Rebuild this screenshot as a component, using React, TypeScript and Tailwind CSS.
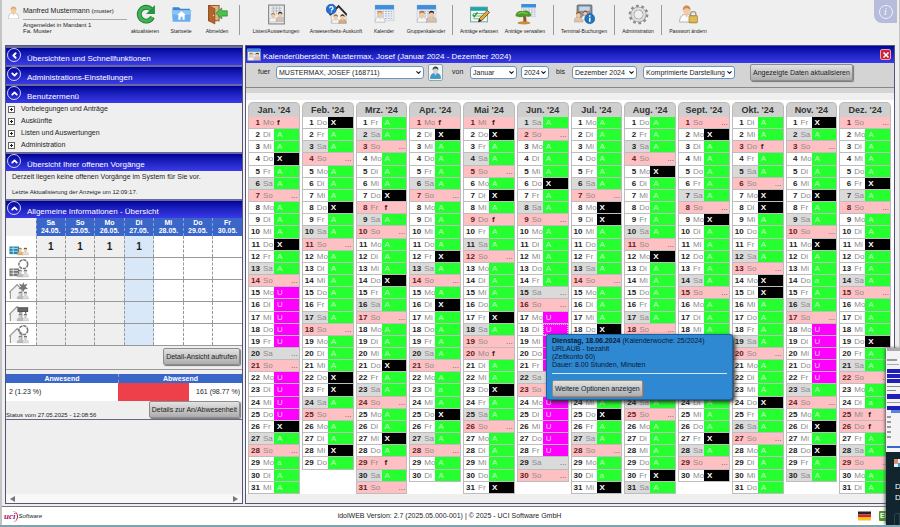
import type { ReactNode } from "react";
import { ChevronDown, ChevronLeft, ChevronUp, X } from "lucide-react";

const WEEKDAYS = ["So", "Mo", "Di", "Mi", "Do", "Fr", "Sa"];

// One character per day: A/a = anwesend, X = abwesend, U = Urlaub, f = Feiertag, . = frei
const MONTHS = [
  { label: "Jan. '24", days: "fAAXAA.AAAXAA.UUUUU..UUUUXA.aAA" },
  { label: "Feb. '24", days: "XAA.AAAXAA.AAAAAA.AAAXXA.AAXA" },
  { label: "Mrz. '24", days: "AA.AAAXfA.AAAXAA.AAAXAA.AAXAfA." },
  { label: "Apr. '24", days: "fXAAAA.AAAAXA.AXAAAA.AaAXAA.AA" },
  { label: "Mai '24", days: "fXAA.AXAfAA.AAAAXA.fAAXAA.AAAAX" },
  { label: "Jun. '24", days: "A.AAAXAA.AAAAA..UUUUU..UUUUU.." },
  { label: "Jul. '24", days: "AAAAAA.XXAAAA.AAAXAA.AAAXAA.AaX" },
  { label: "Aug. '24", days: "AAA.XAAAAA.XAAAAA.AAAAAA.AAAAXA" },
  { label: "Sept. '24", days: ".XAAAAA.XAAAAA.AAAAAA.AAAAXA.X" },
  { label: "Okt. '24", days: "AAfAA.XXAAAA.XXAAAA.AAAXAA.AAAA" },
  { label: "Nov. '24", days: "XA.AAAXAA.XAAaAA.UUUUUA.AXAXAA" },
  { label: "Dez. '24", days: ".AAAAXA.AAXAAA.AAAXAA.AaffAA.AA" },
];

const CODE_CLASS: Record<string, string> = {
  A: "bg-[#25ff30] text-[#c4ffc6]",
  a: "bg-[#25ff30] text-[#c4ffc6]",
  X: "bg-black text-white font-bold",
  U: "bg-[#ff00ff] text-[#ffd0ff]",
  f: "text-[#401818] font-bold",
};

function Person({ x = 0, y = 0, s = 1, body = "#f4f4f4", hair = "#8a5a2c", skin = "#f1c9a2" }: { x?: number; y?: number; s?: number; body?: string; hair?: string; skin?: string }) {
  return (
    <g transform={`translate(${x} ${y}) scale(${s})`}>
      <path d="M0 12c0-4 2-5.5 5-5.5S10 8 10 12z" fill={body} stroke="#999" strokeWidth=".5" />
      <path d="M3.6 6.5h2.8L5 9z" fill={skin} />
      <ellipse cx="5" cy="3.8" rx="2.4" ry="2.9" fill={skin} />
      <path d="M2.4 4C2 1.400 3.500.4 5 .4S8 1.400 7.600 4C7 2.500 6 2.200 5 2.200S3 2.500 2.400 4z" fill={hair} />
    </g>
  );
}

function CalendarShape({ x = 0, y = 0, w = 18, h = 15 }: { x?: number; y?: number; w?: number; h?: number }) {
  return (
    <g transform={`translate(${x} ${y})`}>
      <rect width={w} height={h} fill="#eef1f7" stroke="#b4bccb" strokeWidth=".5" />
      <rect width={w} height={h * 0.28} fill="#3f8edb" />
      {[0.4, 0.55, 0.7, 0.85].map((r) => (
        <path key={r} d={`M${w * 0.1} ${h * r}H${w * 0.92}`} stroke="#a5aec0" strokeWidth="1" strokeDasharray="1.6 1" />
      ))}
    </g>
  );
}

const icons: Record<string, ReactNode> = {
  refresh: (
    <g>
      <path d="M15.500 5.200A6.600 6.600 0 1 0 16.600 12.500" fill="none" stroke="#1d7d35" strokeWidth="4.600" />
      <path d="M15.500 5.200A6.600 6.600 0 1 0 16.600 12.500" fill="none" stroke="#3fb252" strokeWidth="3" />
      <path d="M19 1v8.500h-8.500z" fill="#279642" />
    </g>
  ),
  home: (
    <g>
      <path d="M1.500 3h6l1.500 1.500h9V8h-16.500z" fill="#3d86cf" />
      <path d="M.8 6h18.400l-.8 11H1.600z" fill="#69aef0" />
      <path d="M.8 6h18.400l-.3 4H1.100z" fill="#8cc4f8" />
      <path d="M10 6.800 5.800 10.500H7V15h2.200v-2.800h1.800V15H13v-4.500h1.200z" fill="#fff" />
    </g>
  ),
  exit: (
    <g>
      <path d="M1.500 1.500h10V16h-10z" fill="#d9b489" stroke="#9b5a2c" />
      <path d="m1.500 1.500 6 3V19l-6-3z" fill="#b5642d" stroke="#864419" strokeWidth=".6" />
      <circle cx="6.200" cy="11" r=".7" fill="#f6d98c" />
      <path d="M8.500 8.800 14 3.800v2.700h5.300v5H14v2.800z" fill="#4fc04c" stroke="#23862c" strokeWidth=".7" />
    </g>
  ),
  lists: (
    <g>
      <rect x="2.500" y="1" width="15" height="18" fill="#e8eaee" stroke="#7c8088" />
      <path d="M5 4h10M5 6.500h10M7 2v8M10 2v8M13 2v8" stroke="#b2b6bf" strokeWidth=".7" />
      <Person x={3} y={8} s={0.75} hair="#b78344" />
      <Person x={9.500} y={7} s={0.8} hair="#3b2417" body="#d5c3b1" />
    </g>
  ),
  presence: (
    <g>
      <path d="M5 10 12 3l7 7v8H5z" fill="#f4f0ec" stroke="#999" strokeWidth=".5" />
      <path d="m3.500 10.500 8.500-8.500 8 8.500" fill="none" stroke="#332a29" strokeWidth="1.800" />
      <Person x={5.500} y={9.500} s={0.75} hair="#9d652e" />
      <Person x={12} y={9.500} s={0.75} hair="#3b2417" body="#d6aa7b" />
      <circle cx="5" cy="5" r="4.800" fill="#2370cf" stroke="#174b99" strokeWidth=".6" />
      <path d="M3.500 4c0-2 3.200-2 3.200 0C6.700 5.200 5.100 5 5.100 6.300M5.100 7.200v1" fill="none" stroke="#fff" strokeWidth="1.200" />
    </g>
  ),
  calendar: (
    <g>
      <CalendarShape x={1} y={1} />
      <Person x={1} y={6} s={0.95} hair="#c39260" />
    </g>
  ),
  group: (
    <g>
      <CalendarShape x={1} y={1} />
      <Person x={1} y={6} s={0.95} hair="#a56b32" />
      <Person x={10} y={6} s={0.95} hair="#332017" body="#d8c1a8" />
    </g>
  ),
  request: (
    <g>
      <rect x="1.500" y="3" width="16" height="14" fill="#f1fbf6" stroke="#7aa6a2" />
      <rect x="1.500" y="3" width="16" height="3.500" fill="#20a5a6" />
      <path d="M4 9h10M4 11.500h8M4 14h6" stroke="#79b57e" strokeWidth="1" />
      <path d="m3.500 10 1.500 2 3-4" fill="none" stroke="#26963a" strokeWidth="1.300" />
      <path d="m9 17 1-3.300L17.500 6l2 2L12 16z" fill="#e7ad3c" stroke="#5d4120" strokeWidth=".8" />
      <path d="m9 17 1-3 1.800 1.900z" fill="#222" />
    </g>
  ),
  manage: (
    <g>
      <CalendarShape x={6} y={0} w={14} h={12} />
      <path d="M7.500 18c.9-3.200.6-5-.8-8l3-.3c1 3 1.600 5 1.100 8.300z" fill="#965726" />
      <path d="M.5 11.500C.5 8 4 6 7.500 7 10 5.200 15 7 15.500 11.200c-2 1.300-4 .8-6 .3-2 1-6 1.800-9 0z" fill="#4c9a2e" />
      <path d="M3 9.500c3-2 6-1.500 9 0" stroke="#8bc34a" fill="none" />
      <ellipse cx="8.500" cy="18" rx="6" ry="1.600" fill="#c98c3c" />
    </g>
  ),
  terminal: (
    <g>
      <rect x="3" y="1" width="14" height="12" rx="1" fill="#8b9099" stroke="#666b74" />
      <rect x="5" y="2.500" width="10" height="4" fill="#bfd8ee" />
      <Person x={0} y={7} s={0.85} hair="#8a5328" body="#e3c2a4" />
      <Person x={7} y={6} s={0.75} hair="#b3432c" />
      <circle cx="15" cy="14" r="4.800" fill="#1e75bd" stroke="#0f5090" strokeWidth=".5" />
      <path d="M15 13v4M15 10.700v1.400" stroke="#fff" strokeWidth="1.500" />
    </g>
  ),
  gear: (
    <g fill="none">
      <circle cx="10" cy="10" r="8.200" stroke="#8c8c8c" strokeWidth="2.400" strokeDasharray="2.580 2.570" />
      <circle cx="10" cy="10" r="5.800" stroke="#8c8c8c" strokeWidth="3.400" />
      <circle cx="10" cy="10" r="5.800" stroke="#dedede" strokeWidth="2.400" />
    </g>
  ),
  password: (
    <g>
      <Person x={1.500} y={1} s={1.350} hair="#c98e4d" body="#fafafa" />
      <path d="M12 11.500V9.500c0-3 5-3 5 0v2" fill="none" stroke="#999" strokeWidth="1.300" />
      <rect x="10.500" y="11" width="8" height="7" rx=".8" fill="#d8b04a" stroke="#9b7827" strokeWidth=".6" />
      <path d="M11 13.500h7M11 15.500h7" stroke="#efd587" strokeWidth=".6" />
    </g>
  ),
};

const TOOLBAR = [
  [
    { label: "aktualisieren", icon: "refresh", width: "w-9" },
    { label: "Startseite", icon: "home", width: "w-9" },
    { label: "Abmelden", icon: "exit", width: "w-9" },
  ],
  [
    { label: "Listen/Auswertungen", icon: "lists", width: "w-16" },
    { label: "Anwesenheits-Auskunft", icon: "presence", width: "w-14" },
    { label: "Kalender", icon: "calendar", width: "w-10" },
    { label: "Gruppenkalender", icon: "group", width: "w-11" },
  ],
  [
    { label: "Anträge erfassen", icon: "request", width: "w-11" },
    { label: "Anträge verwalten", icon: "manage", width: "w-12" },
  ],
  [{ label: "Terminal-Buchungen", icon: "terminal", width: "w-13" }],
  [{ label: "Administration", icon: "gear", width: "w-[38px]" }],
  [{ label: "Passwort ändern", icon: "password", width: "w-11" }],
];

function TopBar() {
  return (
    <header className="flex h-[45px] shrink-0 items-start">
      <div className="flex w-[125px] shrink-0 gap-1 pl-[6px] pt-[6px]">
        <svg viewBox="0 0 10 12" className="h-[13px] w-[11px] shrink-0" aria-hidden="true">
          <Person hair="#d9a86e" body="#fff" />
        </svg>
        <div className="flex-1">
          <p className="whitespace-nowrap border-b border-[#aaa] pb-[3px] text-[7px] leading-[9px]">
            Manfred Mustermann <span className="text-[6px]">(muster)</span>
          </p>
          <p className="whitespace-nowrap pt-[2px] text-[6px] leading-[6px]">
            Angemeldet in Mandant 1<br />
            Fa. Muster
          </p>
        </div>
      </div>
      <nav className="flex flex-1 pt-1">
        {TOOLBAR.map((group, i) => (
          <div key={i} className="flex">
            {i > 0 && <span className="mx-1 mt-px h-[30px] w-px bg-[#9a9a9a]" />}
            {group.map((item) => (
              <button key={item.label} type="button" className={`flex flex-col items-center gap-[3px] ${item.width}`}>
                <svg viewBox="0 0 20 20" className="size-[21px] shrink-0" aria-hidden="true">
                  {icons[item.icon]}
                </svg>
                <span className="whitespace-nowrap text-[5px] leading-[7px]">{item.label}</span>
              </button>
            ))}
          </div>
        ))}
      </nav>
      <button type="button" aria-label="Info" className="mr-[2px] flex size-[23px] items-center justify-center rounded-bl-lg bg-[#b7bbdc]">
        <span className="flex size-[14px] items-center justify-center rounded-full border border-white/80 font-[Liberation_Serif] text-[10px] italic leading-none text-white">
          i
        </span>
      </button>
    </header>
  );
}

function SectionHeader({ title, icon: Icon = ChevronUp }: { title: string; icon?: typeof ChevronUp }) {
  return (
    <h2 className="border-t-2 border-[#6a6a9a] text-white">
      <button type="button" className="flex h-[17px] w-full items-start gap-[6px] bg-linear-to-b from-[#02029a] to-[#3a3ae8] pl-px">
        <span className="flex size-[14px] shrink-0 items-center justify-center rounded-full border border-white/80">
          <Icon size={9} strokeWidth={5} />
        </span>
        <span className="pt-[6px] text-[8px] leading-[10px]">{title}</span>
      </button>
    </h2>
  );
}

function GrayButton({ children, className = "" }: { children: ReactNode; className?: string }) {
  return (
    <button
      type="button"
      className={`h-[17px] whitespace-nowrap rounded-[2px] border border-[#8c8c8c] bg-linear-to-b from-[#e2e2e2] to-[#adadad] px-[2px] text-[7px] leading-[10px] shadow-[1px_1px_1px_#777] ${className}`}
    >
      {children}
    </button>
  );
}

function StatusIcon({ kind }: { kind: number }) {
  const color = kind === 0;
  return (
    <svg viewBox="0 0 22 22" className="h-[21px] w-[22px]" aria-hidden="true">
      {kind < 2 ? (
        <g>
          <path d="M1 11h10v8H1z" fill={color ? "#2787a8" : "#777"} />
          <path d="M2 13h8M2 16h8M5 11v8" stroke={color ? "#a5dced" : "#ddd"} strokeWidth="1" />
        </g>
      ) : (
        <path d="M2 20v-8l7-7 5 5v10M.8 13 9 4.800l5 5" fill="#f2f2f2" stroke="#999" strokeWidth="1.200" />
      )}
      <Person x={9} y={12} s={0.65} hair={color ? "#b36b2b" : "#666"} skin={color ? "#f1c9a2" : "#ccc"} body={color ? "#e8b06d" : "#bbb"} />
      <Person x={14.500} y={12} s={0.65} hair={color ? "#5b341b" : "#555"} skin={color ? "#f1c9a2" : "#ccc"} body={color ? "#f0dfcb" : "#ddd"} />
      {(kind === 1 || kind === 4) && <circle cx="15.500" cy="6.500" r="4.600" fill="none" stroke="#777" strokeWidth="1.600" strokeDasharray="3.400 .8" />}
      {kind === 2 && <path d="m15.500 2 1 3 3.500-1-2 3 2.500 2.500-3.500.2-1.500 3-1.500-3-3.500-.2 2.500-2.500-2-3 3.500 1z" fill="#777" />}
      {kind === 3 && <path d="M10 6h10v4H10zM12 10v2M18 10v2" fill="#666" stroke="#555" strokeWidth="1.200" />}
    </svg>
  );
}

const WEEK = [
  ["Sa", "24.05."],
  ["So", "25.05."],
  ["Mo", "26.05."],
  ["Di", "27.05."],
  ["Mi", "28.05."],
  ["Do", "29.05."],
  ["Fr", "30.05."],
];

function weekCellBg(i: number): string {
  if (i < 3) return "bg-[#efefef]";
  if (i === 3) return "bg-[#d8e8f8]";
  return "bg-white";
}

function Sidebar() {
  return (
    <aside className="flex w-[238px] shrink-0 flex-col border border-[#555577] bg-[#efefef]">
      <SectionHeader title="Übersichten und Schnellfunktionen" icon={ChevronLeft} />
      <SectionHeader title="Administrations-Einstellungen" icon={ChevronDown} />
      <SectionHeader title="Benutzermenü" />
      <ul className="pb-px">
        {["Vorbelegungen und Anträge", "Auskünfte", "Listen und Auswertungen", "Administration"].map((item) => (
          <li key={item}>
            <a href="#" className="flex h-[12px] items-center gap-[6px] pl-[2px] text-[7px] leading-[10px]">
              <svg viewBox="0 0 7 7" className="size-[7px]" aria-hidden="true">
                <rect x=".5" y=".5" width="6" height="6" fill="#fff" stroke="#666" />
                <path d="M2 3.500h3M3.500 2v3" stroke="#222" />
              </svg>
              {item}
            </a>
          </li>
        ))}
      </ul>
      <SectionHeader title="Übersicht Ihrer offenen Vorgänge" />
      <div className="h-[28px] pl-[6px] pt-px">
        <p className="text-[7px] leading-[10px]">Derzeit liegen keine offenen Vorgänge im System für Sie vor.</p>
        <p className="pt-[5px] text-[6px] leading-[10px]">Letzte Aktualisierung der Anzeige um 12:09:17.</p>
      </div>
      <SectionHeader title="Allgemeine Informationen - Übersicht" />
      <table className="w-full table-fixed border-collapse text-center">
        <thead>
          <tr className="h-[18px] bg-[#3a66c8] text-[7px] leading-[8px] text-white">
            <th className="w-[30px] bg-[#efefef]" />
            {WEEK.map(([day, date]) => (
              <th key={day} className="border-l border-dashed border-[#8aa0d8] p-0 font-bold">
                {day}
                <br />
                {date}
              </th>
            ))}
          </tr>
        </thead>
        <tbody>
          {[0, 1, 2, 3, 4].map((kind) => (
            <tr key={kind} className="border-b border-[#999]">
              <td className="bg-white p-0 pl-[2px]">
                <StatusIcon kind={kind} />
              </td>
              {WEEK.map(([day], i) => (
                <td key={day} className={`border-l border-dashed border-[#999] p-0 text-[10px] font-bold leading-[10px] ${weekCellBg(i)}`}>
                  {kind === 0 && i < 4 ? "1" : ""}
                </td>
              ))}
            </tr>
          ))}
        </tbody>
      </table>
      <div className="flex h-[24px] justify-end border-b border-[#999] pr-[2px] pt-[2px]">
        <GrayButton>Detail-Ansicht aufrufen</GrayButton>
      </div>
      <div className="mt-1 grid grid-cols-[112px_1fr] text-[7px]">
        <div className="bg-[#3a66c8] text-center font-bold leading-[9px] text-white">Anwesend</div>
        <div className="border-l border-dashed border-[#8aa0d8] bg-[#3a66c8] text-center font-bold leading-[9px] text-white">Abwesend</div>
        <div className="bg-white pl-[3px] leading-[18px]">2 (1.23 %)</div>
        <div className="flex bg-white leading-[18px]">
          <span className="w-[71px] bg-[#ee404a]" />
          <span className="flex-1 pr-[2px] text-right">161 (98.77 %)</span>
        </div>
      </div>
      <div className="flex h-[19px] items-start justify-between border-b border-[#66668a] pr-[2px]">
        <span className="self-end text-[6px] leading-[8px]">Status vom 27.05.2025 - 12:08:56</span>
        <GrayButton>Details zur An/Abwesenheit</GrayButton>
      </div>
      <div className="flex-1" />
      <div className="flex h-[9px] items-center justify-between bg-[#f8f8f8] px-1">
        <svg viewBox="0 0 5 6" className="h-[6px] w-[5px]" aria-hidden="true">
          <path d="M5 0v6L0 3z" fill="#777" />
        </svg>
        <svg viewBox="0 0 5 6" className="h-[6px] w-[5px]" aria-hidden="true">
          <path d="M0 0v6l5-3z" fill="#777" />
        </svg>
      </div>
    </aside>
  );
}

function Select({ label, value, width }: { label: string; value: string; width: string }) {
  return (
    <div className={`relative ${width}`}>
      <select
        aria-label={label}
        className="block h-[13px] w-full appearance-none rounded-[3px] border border-[#6b93bd] bg-white pl-[2px] pr-2 text-[7px] leading-[10px]"
      >
        <option>{value}</option>
      </select>
      <ChevronDown size={7} strokeWidth={4} className="pointer-events-none absolute right-[2px] top-[3px]" />
    </div>
  );
}

function DayCell({ month, day, code }: { month: number; day: number; code: string }) {
  const weekday = new Date(2024, month, day).getDay();
  const free = code === "." || code === "f";
  const saturday = weekday === 6;
  const rowBg = free && !saturday ? "bg-[#ffc0c3]" : saturday ? "bg-[#dadada]" : "bg-white";
  const selected = month === 5 && day === 18;

  return (
    <td className={`border border-t-0 border-[#bdbdbd] p-0 ${rowBg}`}>
      <div className="flex h-full text-[8px] leading-[11px]">
        <span className={`w-[11px] shrink-0 text-right font-bold ${free && !saturday ? "text-[#5a2222]" : "text-[#222]"}`}>{day}</span>
        <span className="w-[14px] shrink-0 overflow-hidden pl-[3px] text-[#8c8c8c]">{WEEKDAYS[weekday]}</span>
        {code === "." ? (
          <span className="flex-1 pr-px text-right text-[#555]">...</span>
        ) : (
          <span className={`flex-1 pl-[3px] ${CODE_CLASS[code]} ${selected ? "outline outline-dotted -outline-offset-1 outline-white/70" : ""}`}>
            {code}
          </span>
        )}
      </div>
    </td>
  );
}

function DayTooltip() {
  return (
    <div
      role="tooltip"
      className="absolute left-[300px] top-[288px] h-[66px] w-[187px] rounded-[3px] border border-[#1d62a5] bg-[#2f88d2] px-[5px] pt-[2px] text-[7px] leading-[8px] text-[#0a1a33] shadow-[2px_2px_4px_#222]"
    >
      <p className="whitespace-nowrap">
        <b>Dienstag, 18.06.2024</b> (Kalenderwoche: 25/2024)
      </p>
      <p>URLAUB - bezahlt</p>
      <p>(Zeitkonto 60)</p>
      <p>Dauer: 8.00 Stunden, Minuten</p>
      <hr className="mb-[6px] mt-1 border-white/80" />
      <GrayButton>Weitere Optionen anzeigen</GrayButton>
    </div>
  );
}

function CalendarPanel() {
  return (
    <main className="relative flex min-w-0 flex-1 flex-col border border-[#555577] bg-[#efefef]">
      <div className="flex h-[17px] shrink-0 items-center gap-[2px] bg-linear-to-b from-[#02029a] to-[#3a3ae8] px-px">
        <svg viewBox="0 0 20 18" className="h-[13px] w-[14px]" aria-hidden="true">
          {icons.group}
        </svg>
        <h1 className="flex-1 pt-[5px] text-[8px] leading-[10px] text-white">Kalenderübersicht: Mustermax, Josef (Januar 2024 - Dezember 2024)</h1>
        <button type="button" aria-label="Schließen" className="mr-[2px] flex size-[11px] items-center justify-center rounded-[2px] border border-[#f0a0a0] bg-[#cc2438] text-white">
          <X size={8} strokeWidth={5} />
        </button>
      </div>
      <form className="flex h-[25px] shrink-0 items-start border-b border-[#888] bg-[#d4d4d4] pl-[12px] pt-px text-[7px]">
        <div className="flex h-[17px] items-center">
          <span className="w-[18px]">fuer</span>
          <Select label="fuer" value="MUSTERMAX, JOSEF (168711)" width="w-[148px]" />
          <button type="button" aria-label="Person wählen" className="ml-1 flex h-[17px] w-[15px] items-center justify-center rounded-[2px] border border-[#8aa] bg-[#f4f4f4]">
            <svg viewBox="0 0 10 12" className="h-[13px] w-[11px]" aria-hidden="true">
              <Person body="#3b9ac8" hair="#333" skin="#c9d6dc" />
            </svg>
          </button>
          <span className="ml-[9px] w-[18px]">von</span>
          <Select label="von Monat" value="Januar" width="w-[47px]" />
          <span className="w-1" />
          <Select label="von Jahr" value="2024" width="w-[28px]" />
          <span className="ml-[7px] w-[16px]">bis</span>
          <Select label="bis" value="Dezember 2024" width="w-[65px]" />
          <span className="w-[6px]" />
          <Select label="Darstellung" value="Komprimierte Darstellung" width="w-[92px]" />
          <GrayButton className="ml-[15px]">Angezeigte Daten aktualisieren</GrayButton>
        </div>
      </form>
      <div className="h-[5px] shrink-0 bg-[#d4d4d4]" />
      <div className="h-[7px] shrink-0" />
      <div className="min-h-0 flex-1 bg-white pr-px">
        <table className="h-full w-full table-fixed border-separate border-spacing-x-[2px] border-spacing-y-0">
          <thead>
            <tr>
              {MONTHS.map((m) => (
                <th key={m.label} className="h-[17px] p-0 pt-[2px]">
                  <div className="h-[15px] rounded-t-[5px] border border-b-0 border-[#bbb] bg-[#cfcfcf] text-[9px] font-bold leading-[15px] text-[#333]">{m.label}</div>
                </th>
              ))}
            </tr>
          </thead>
          <tbody>
            {Array.from({ length: 31 }, (_, i) => (
              <tr key={i} className="h-[12px]">
                {MONTHS.map((m, month) =>
                  m.days[i] ? <DayCell key={m.label} month={month} day={i + 1} code={m.days[i]!} /> : <td key={m.label} className="p-0" />,
                )}
              </tr>
            ))}
          </tbody>
        </table>
      </div>
      <div className="h-[9px] shrink-0" />
      <DayTooltip />
    </main>
  );
}

function Footer() {
  return (
    <footer className="flex h-[19px] shrink-0 items-center border-t border-[#777] bg-white pl-[2px] pr-1 text-[7px]">
      <div className="flex flex-1 items-center gap-px italic">
        <span className="rounded-r-full border-r border-[#a3195b] pr-px font-[Liberation_Serif] text-[9px] font-bold leading-[11px] text-[#a3195b]">uci</span>
        <span className="text-[6px]">Software</span>
      </div>
      <p>idolWEB Version: 2.7 (2025.05.000-001) | © 2025 - UCI Software GmbH</p>
      <div className="flex flex-1 justify-end gap-2">
        <svg viewBox="0 0 13 9" className="h-[10px] w-[13px]" aria-label="Deutsch">
          <path d="M0 0h13v3H0z" fill="#222" />
          <path d="M0 3h13v3H0z" fill="#d22" />
          <path d="M0 6h13v3H0z" fill="#f5c518" />
        </svg>
        <span className="h-[10px] w-[16px] rounded-[1px] bg-[#4c9a1e] pl-px font-bold leading-[10px] text-white">EN</span>
      </div>
    </footer>
  );
}

function WindowPreview() {
  return (
    <div className="absolute bottom-0 right-0 flex h-[177px] w-[14px] flex-col overflow-hidden bg-[#10252d] text-[8px] text-white shadow-[-1px_0_3px_#555]">
      <div className="h-[104px] shrink-0 bg-[#f3f3f6] pl-px">
        <div className="h-[3px] bg-[#aaa]" />
        <div className="mt-2 h-[2px] w-[10px] bg-[#999]" />
        <div className="mt-[3px] h-px w-[12px] bg-[#aaa]" />
        <div className="mt-1 flex flex-col gap-px">
          <div className="h-1 bg-[#2020b8]" />
          <div className="h-1 bg-[#2020b8]" />
          <div className="h-1 bg-[#2020b8]" />
        </div>
        <div className="my-[3px] h-px bg-[#888]" />
        <div className="mb-[3px] h-px w-[9px] bg-[#888]" />
        <div className="h-[5px] bg-[#2020b8]" />
        <div className="my-[3px] h-px bg-[#999]" />
        <div className="h-1 bg-[#2020b8]" />
        <div className="ml-1 h-[3px] bg-[#5b84d8]" />
        {[0, 1, 2, 3, 4].map((n) => (
          <div key={n} className="mt-[3px] h-[2px] w-1 bg-[#999]" />
        ))}
        <div className="mt-2 h-[2px] bg-[#3a66c8]" />
      </div>
      <svg viewBox="0 0 10 10" className="ml-2 mt-[7px] size-[8px] shrink-0" aria-hidden="true">
        <rect width="10" height="10" fill="#e7eef5" />
        <rect width="5" height="6" fill="#d98d6b" />
        <rect x="5" y="5" width="5" height="5" fill="#48a0c8" />
      </svg>
      <p className="pl-[9px] pt-[14px] leading-[11px]">
        D<br />D
      </p>
      <div className="ml-2 mt-[10px] h-5 shrink-0 rounded-tl-[2px] border border-[#2b424b]" />
    </div>
  );
}

export default function App() {
  return (
    <div className="relative flex h-screen flex-col overflow-hidden border-b-2 border-[#7fa3ad] bg-[#efefef] font-[Liberation_Sans,Arial,sans-serif] text-[#1c1c1c]">
      <div className="flex min-h-0 flex-1 flex-col border-l-2 border-r border-[#c4c4c4]">
        <TopBar />
        <div className="flex min-h-0 flex-1 gap-[2px] pb-[2px] pl-[3px] pr-1">
          <Sidebar />
          <CalendarPanel />
        </div>
        <Footer />
      </div>
      <WindowPreview />
    </div>
  );
}
